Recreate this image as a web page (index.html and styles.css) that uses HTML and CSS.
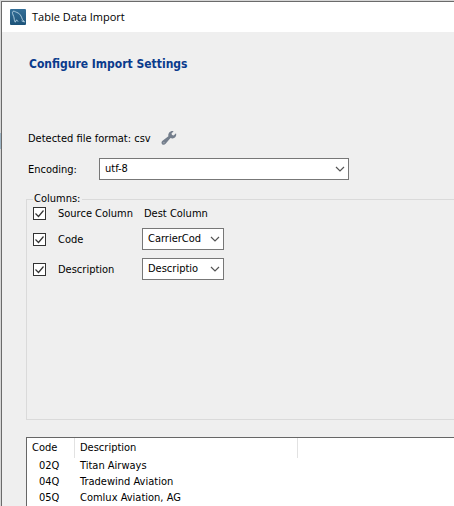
FILE: index.html
```html
<!DOCTYPE html>
<html lang="en">
<head>
<meta charset="utf-8">
<title>Table Data Import</title>
<link rel="stylesheet" href="styles.css">
</head>
<body>
<div class="window">
  <header class="titlebar">
    <svg class="app-icon" viewBox="0 0 16 16" aria-hidden="true">
      <defs><linearGradient id="sea" x1="0" y1="0" x2="0" y2="1"><stop offset="0" stop-color="#346f98"/><stop offset="1" stop-color="#1d5379"/></linearGradient></defs>
      <rect width="16" height="16" rx="1" fill="url(#sea)"/>
      <path d="M5.3 13.2C3.8 11 4.5 9.5 3.7 7.5C2.8 5.3 1.8 3.3 3 2.4C4 1.7 5.2 2.8 6.3 3.2C10 4 11.5 7.5 12.3 10.3L14.5 13L11.6 11.8M5.3 13.2L6.5 10.8L8 12.6" fill="none" stroke="#b9d5e5" stroke-width="0.9" stroke-linejoin="round"/>
    </svg>
    <span>Table Data Import</span>
  </header>
  <main class="content">
    <h1>Configure Import Settings</h1>
    <div class="format">
      <span>Detected file format: csv</span>
      <button class="tool" type="button" aria-label="Format options">
        <svg viewBox="0 0 16 16" aria-hidden="true"><path d="M12.6 1.2L10.5 3.5L11 5.1L12.7 5.5L15 3.3C15.8 5.5 14.4 8 12 8.4C11.1 8.6 10.2 8.3 9.5 8L4.6 13.7C3.7 15 2.1 15.2 1.1 14.2C.1 13.2.4 11.7 1.5 10.8L7.4 6.3C6.7 3.3 9.4.4 12.6 1.2Z" fill="#747e8c"/><circle cx="2.9" cy="12.7" r=".8" fill="#a2a9b3"/></svg>
      </button>
    </div>
    <div class="encoding">
      <label for="encoding">Encoding:</label>
      <select id="encoding"><option>utf-8</option></select>
    </div>
    <fieldset class="columns">
      <legend>Columns:</legend>
      <div class="mapping mapping-head">
        <input type="checkbox" id="all" checked>
        <label for="all">Source Column</label>
        <span>Dest Column</span>
      </div>
      <div class="mapping">
        <input type="checkbox" id="code" checked>
        <label for="code">Code</label>
        <select aria-label="Destination for Code"><option>CarrierCod</option></select>
      </div>
      <div class="mapping">
        <input type="checkbox" id="description" checked>
        <label for="description">Description</label>
        <select aria-label="Destination for Description"><option>Descriptio</option></select>
      </div>
    </fieldset>
    <div class="preview">
      <table>
        <thead><tr><th class="code">Code</th><th class="name">Description</th><th></th></tr></thead>
        <tbody>
          <tr><td>02Q</td><td>Titan Airways</td><td></td></tr>
          <tr><td>04Q</td><td>Tradewind Aviation</td><td></td></tr>
          <tr><td>05Q</td><td>Comlux Aviation, AG</td><td></td></tr>
        </tbody>
      </table>
    </div>
  </main>
</div>
</body>
</html>
```
FILE: styles.css
```css
* { box-sizing: border-box; }

body {
  margin: 0;
  min-height: 100vh;
  padding: 1px 0 0 1px;
  display: flex;
  background: linear-gradient(#9db4c4, #9db4c4) 0 133px / 1px 16px no-repeat #d6d6d6;
  color: #000;
  font: 11px/16px "DejaVu Sans Condensed", "DejaVu Sans", sans-serif;
  overflow: hidden;
}

.window {
  flex: 1;
  display: flex;
  flex-direction: column;
  border-top: 1px solid #6b6b6b;
  border-left: 1px solid #6b6b6b;
  background: #efefef;
}

.titlebar {
  display: flex;
  align-items: center;
  gap: 6px;
  height: 30px;
  padding-left: 8px;
  background: #fff;
  font-family: "Open Sans", "Noto Sans", sans-serif;
}

.app-icon { width: 16px; height: 16px; }

.content {
  flex: 1;
  display: flex;
  flex-direction: column;
  padding: 24px 0 0 24px;
}

h1 {
  margin: 0 0 56px 3px;
  color: #0a3a8c;
  font-size: 12px;
  line-height: 16px;
}

.format {
  display: flex;
  align-items: center;
  gap: 10px;
  height: 20px;
  margin-left: 2px;
}

.format span,
.encoding label,
.mapping label,
.mapping span {
  padding-top: 2px;
  white-space: nowrap;
}

.tool {
  width: 16px;
  height: 16px;
  padding: 0;
  border: 0;
  background: none;
}

.tool svg { display: block; }

.encoding {
  display: grid;
  grid-template-columns: 71px 250px;
  align-items: center;
  margin: 10px 0 0 2px;
}

select {
  appearance: none;
  width: 100%;
  height: 22px;
  padding: 0 20px 0 5px;
  border: 1px solid #777;
  border-radius: 0;
  color: #000;
  font: inherit;
  background: #fff url("data:image/svg+xml,%3Csvg xmlns='http://www.w3.org/2000/svg' width='10' height='6'%3E%3Cpath d='M1 1l4 4 4-4' fill='none' stroke='%23555' stroke-width='1.2'/%3E%3C/svg%3E") no-repeat right 3px center;
}

.columns {
  height: 229px;
  min-width: 0;
  margin: 11px 0 0;
  padding: 0 0 0 6px;
  border: 1px solid #dadada;
  border-right: 0;
}

legend { height: 16px; padding: 0 2px 0 1px; }

.mapping {
  display: grid;
  grid-template-columns: 13px 72px 82px;
  column-gap: 12px;
  align-items: center;
  height: 30px;
}

.mapping-head {
  grid-template-columns: 13px 74px 82px;
  height: 16px;
  margin: -3px 0 4px;
}

input[type="checkbox"] {
  appearance: none;
  width: 13px;
  height: 13px;
  margin: 0;
  border: 1px solid #333;
  background: #fff url("data:image/svg+xml,%3Csvg xmlns='http://www.w3.org/2000/svg' width='11' height='11'%3E%3Cpath d='M1.5 5.5l3 3 5-6' fill='none' stroke='%23333' stroke-width='1.2'/%3E%3C/svg%3E") center no-repeat;
}

.preview {
  flex: 1;
  margin-top: 17px;
  border-top: 1px solid #666;
  border-left: 1px solid #666;
  background: #fff;
}

table {
  width: 100%;
  table-layout: fixed;
  border-collapse: separate;
  border-spacing: 0;
}

th, td {
  height: 16px;
  padding: 0 0 0 5px;
  text-align: left;
  font-weight: normal;
  white-space: nowrap;
}

th { height: 20px; border-right: 1px solid #e2e2e2; }
th:last-child { border-right: 0; }
td:first-child { padding-left: 12px; }
.code { width: 48px; }
.name { width: 223px; }
```
